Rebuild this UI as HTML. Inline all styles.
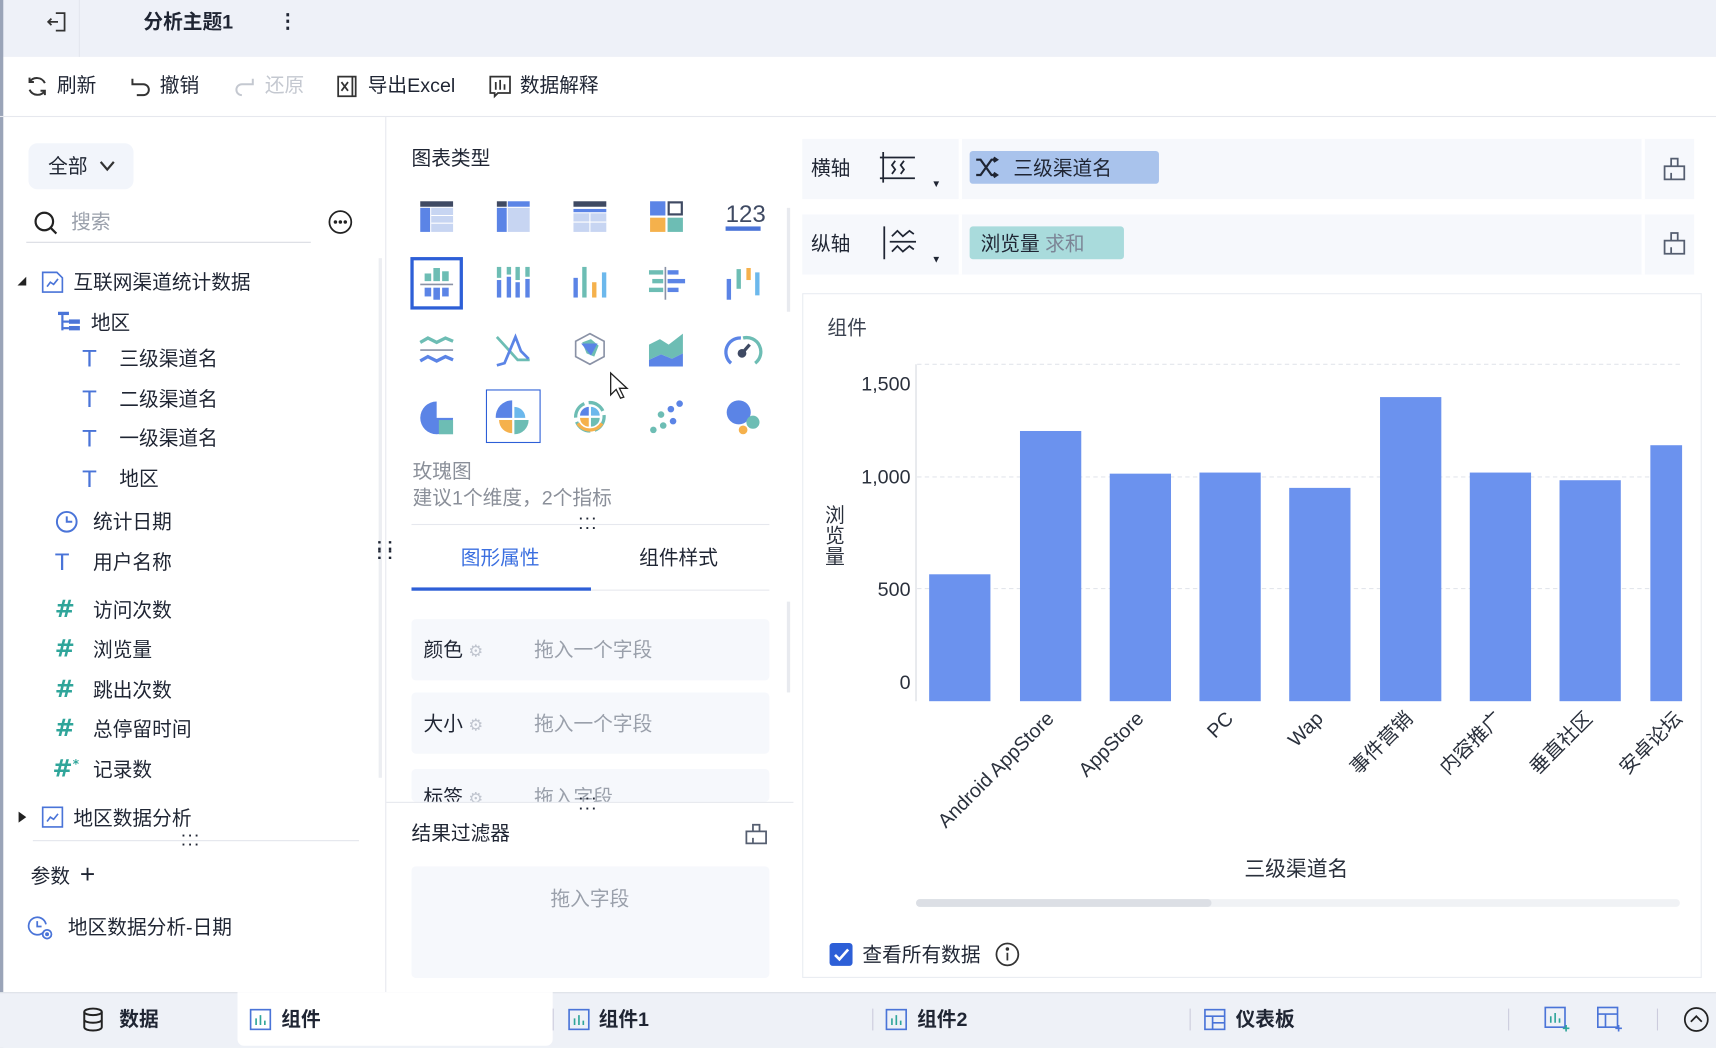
<!DOCTYPE html>
<html><head><meta charset="utf-8"><style>
*{box-sizing:border-box;margin:0;padding:0}
html,body{width:1716px;height:1048px;overflow:hidden;background:#fff}
#w{position:absolute;left:0;top:0;width:1568px;height:958px;transform:scale(1.0944,1.0939);transform-origin:0 0;font-family:"Liberation Sans","Noto Sans CJK SC",sans-serif;color:#1f2533;font-size:18px;line-height:17px}
.a{position:absolute;white-space:nowrap}
.g{color:#9aa0ab}
.h{color:#2fa59a;font-size:22px;font-weight:bold;font-family:"DejaVu Sans",sans-serif}
svg{position:absolute;overflow:visible}
</style></head><body><div id="w">
<!-- top bar -->
<div class="a" style="left:0;top:0;width:1568px;height:52px;background:#eef1f8"></div>
<div class="a" style="left:0;top:0;width:3px;height:958px;background:#9aa4b8"></div>
<div class="a" style="left:72px;top:0;width:1px;height:52px;background:#e2e6ee"></div>
<svg style="left:42px;top:9px" width="22" height="22" viewBox="0 0 22 22" fill="none" stroke="#333" stroke-width="1.6"><path d="M9 3h8v16H9M2 11h9M5 8l-3 3 3 3"/></svg>
<div class="a" style="left:131px;top:12px;font-weight:bold;font-size:18px">分析主题1</div>
<div class="a" style="left:254px;top:11px;font-weight:bold">⋮</div>
<!-- toolbar -->
<div class="a" style="left:0;top:106px;width:1568px;height:1px;background:#e6e8ee"></div>
<svg style="left:23px;top:68px" width="22" height="22" viewBox="0 0 22 22" fill="none" stroke="#333" stroke-width="1.8"><path d="M18 8A8 8 0 0 0 4 7M4 14a8 8 0 0 0 14 1M4 3v4h4M18 19v-4h-4"/></svg>
<div class="a" style="left:52px;top:70px">刷新</div>
<svg style="left:118px;top:68px" width="22" height="22" viewBox="0 0 22 22" fill="none" stroke="#333" stroke-width="1.8"><path d="M3 4v5h5M3 9h10a5 5 0 0 1 0 10H7"/></svg>
<div class="a" style="left:146px;top:70px">撤销</div>
<svg style="left:212px;top:68px" width="22" height="22" viewBox="0 0 22 22" fill="none" stroke="#c4c8d0" stroke-width="1.8"><path d="M19 4v5h-5M19 9H9a5 5 0 0 0 0 10"/></svg>
<div class="a" style="left:242px;top:70px;color:#c4c8d0">还原</div>
<svg style="left:306px;top:68px" width="22" height="22" viewBox="0 0 22 22" fill="none" stroke="#333" stroke-width="1.6"><path d="M3 2h13v18H3zM16 2h3v18h-3M6 7l6 8M12 7l-6 8"/></svg>
<div class="a" style="left:336px;top:70px">导出Excel</div>
<svg style="left:446px;top:68px" width="22" height="22" viewBox="0 0 22 22" fill="none" stroke="#333" stroke-width="1.6"><path d="M2 2h18v15H9l-3 3v-3H2zM7 7v7M11 5v9M15 9v5"/></svg>
<div class="a" style="left:475px;top:70px">数据解释</div>
<!-- left panel -->
<div class="a" style="left:352px;top:107px;width:1px;height:800px;background:#e6e8ee"></div>
<div class="a" style="left:26px;top:131px;width:96px;height:42px;background:#f2f5fb;border-radius:8px"></div>
<div class="a" style="left:44px;top:144px">全部</div>
<svg style="left:90px;top:146px" width="16" height="12" viewBox="0 0 16 12" fill="none" stroke="#333" stroke-width="2"><path d="M2 2l6 7 6-7"/></svg>
<svg style="left:30px;top:192px" width="24" height="24" viewBox="0 0 24 24" fill="none" stroke="#222" stroke-width="2"><circle cx="10.5" cy="10.5" r="8"/><path d="M16.5 16.5l5 5"/></svg>
<div class="a g" style="left:65px;top:195px">搜索</div>
<div class="a" style="left:24px;top:221px;width:260px;height:1px;background:#d8dbe2"></div>
<svg style="left:299px;top:191px" width="24" height="24" viewBox="0 0 24 24" fill="none" stroke="#222" stroke-width="1.6"><circle cx="12" cy="12" r="10"/><circle cx="7.5" cy="12" r=".8" fill="#222"/><circle cx="12" cy="12" r=".8" fill="#222"/><circle cx="16.5" cy="12" r=".8" fill="#222"/></svg>
<div class="a" style="left:346px;top:236px;width:3px;height:475px;background:#eceef2"></div>
<svg style="left:15px;top:252px" width="10" height="10"><path d="M9 1v8H1z" fill="#222"/></svg>
<svg style="left:37px;top:247px" width="22" height="22" viewBox="0 0 22 22" fill="none" stroke="#4a74d8" stroke-width="1.5"><path d="M2 2h13l5 5v13H2z"/><path d="M6 15l3-4 3 2 4-5"/></svg>
<div class="a" style="left:67px;top:250px">互联网渠道统计数据</div>
<svg style="left:52px;top:284px" width="22" height="20" viewBox="0 0 22 20" fill="#4a74d8"><rect x="1" y="1" width="10" height="3"/><rect x="4" y="4" width="2" height="14"/><rect x="6" y="9" width="5" height="2"/><rect x="11" y="8" width="10" height="4"/><rect x="6" y="15" width="5" height="2"/><rect x="11" y="14" width="10" height="4"/></svg>
<div class="a" style="left:83px;top:287px">地区</div>
<div class="a" style="left:75px;top:319px;color:#4a74d8;font-size:22px">T</div><div class="a" style="left:109px;top:320px">三级渠道名</div>
<div class="a" style="left:75px;top:356px;color:#4a74d8;font-size:22px">T</div><div class="a" style="left:109px;top:357px">二级渠道名</div>
<div class="a" style="left:75px;top:392px;color:#4a74d8;font-size:22px">T</div><div class="a" style="left:109px;top:393px">一级渠道名</div>
<div class="a" style="left:75px;top:429px;color:#4a74d8;font-size:22px">T</div><div class="a" style="left:109px;top:430px">地区</div>
<svg style="left:50px;top:466px" width="22" height="22" viewBox="0 0 22 22" fill="none" stroke="#4a74d8" stroke-width="1.8"><circle cx="11" cy="11" r="9"/><path d="M11 6v5h5"/></svg>
<div class="a" style="left:85px;top:469px">统计日期</div>
<div class="a" style="left:50px;top:505px;color:#4a74d8;font-size:22px">T</div><div class="a" style="left:85px;top:506px">用户名称</div>
<div class="a h" style="left:50px;top:549px">#</div><div class="a" style="left:85px;top:550px">访问次数</div>
<div class="a h" style="left:50px;top:585px">#</div><div class="a" style="left:85px;top:586px">浏览量</div>
<div class="a h" style="left:50px;top:622px">#</div><div class="a" style="left:85px;top:623px">跳出次数</div>
<div class="a h" style="left:50px;top:658px">#</div><div class="a" style="left:85px;top:659px">总停留时间</div>
<div class="a h" style="left:48px;top:695px">#<span style="font-size:11px;position:relative;top:-8px">*</span></div><div class="a" style="left:85px;top:696px">记录数</div>
<svg style="left:16px;top:741px" width="10" height="12"><path d="M1 1l7 5-7 5z" fill="#222"/></svg>
<svg style="left:37px;top:736px" width="22" height="22" viewBox="0 0 22 22" fill="none" stroke="#4a74d8" stroke-width="1.5"><path d="M2 2h18v18H2z"/><path d="M6 15l3-4 3 2 4-5"/></svg>
<div class="a" style="left:67px;top:740px">地区数据分析</div>
<div class="a" style="left:30px;top:768px;width:298px;height:1px;background:#e3e6ec"></div>
<div class="a" style="left:166px;top:760px;font-size:12px;font-weight:bold;line-height:8px;letter-spacing:2px">···<br>···</div>
<div class="a" style="left:28px;top:793px">参数</div>
<div class="a" style="left:73px;top:788px;font-size:24px;line-height:24px">+</div>
<svg style="left:25px;top:837px" width="26" height="24" viewBox="0 0 26 24" fill="none" stroke="#4a74d8" stroke-width="1.6"><path d="M15 15A8 8 0 1 1 17 8"/><path d="M9 5v5h4"/><circle cx="18" cy="17" r="4"/><circle cx="18" cy="17" r="1" fill="#4a74d8"/></svg>
<div class="a" style="left:62px;top:840px">地区数据分析-日期</div>
<div class="a" style="left:344px;top:495px;font-size:16px;font-weight:bold;line-height:8px">: :<br>: :</div>
<!-- middle panel -->
<div class="a" style="left:376px;top:137px">图表类型</div>
<div class="a" style="left:719px;top:190px;width:3px;height:95px;background:#e8eaef"></div>
<svg style="left:384px;top:184px" width="30" height="28"><rect x="0" y="0" width="30" height="5" fill="#3f4a63"/><rect x="0" y="6" width="9" height="22" fill="#5b84e6"/><rect x="10" y="6" width="20" height="22" fill="#c7d5f2"/><path d="M10 13h20M10 20h20" stroke="#fff"/></svg>
<svg style="left:454px;top:184px" width="30" height="28"><rect x="0" y="0" width="9" height="5" fill="#3f4a63"/><rect x="10" y="0" width="20" height="5" fill="#5b84e6"/><rect x="0" y="6" width="9" height="22" fill="#5b84e6"/><rect x="10" y="6" width="20" height="22" fill="#c7d5f2"/></svg>
<svg style="left:524px;top:184px" width="30" height="28"><rect x="0" y="0" width="30" height="5" fill="#3f4a63"/><rect x="0" y="7" width="30" height="3" fill="#5b84e6"/><rect x="0" y="11" width="30" height="17" fill="#c7d5f2"/><path d="M15 11v17M0 19h30" stroke="#fff"/></svg>
<svg style="left:594px;top:184px" width="30" height="28"><rect x="0" y="0" width="14" height="13" fill="#5b84e6"/><rect x="17" y="1" width="12" height="11" fill="none" stroke="#3f4a63" stroke-width="2"/><rect x="0" y="15" width="14" height="13" fill="#f5b14c"/><rect x="16" y="15" width="14" height="13" fill="#6dbdb4"/></svg>
<div class="a" style="left:663px;top:186px;font-size:22px;line-height:20px;color:#3f4a63">123</div>
<div class="a" style="left:663px;top:207px;width:32px;height:4px;background:#4a74d8"></div>
<div class="a" style="left:375px;top:235px;width:48px;height:48px;border:3px solid #2d5fd7"></div>
<svg style="left:384px;top:244px" width="30" height="30"><rect x="4" y="6" width="6" height="7" fill="#6dbdb4"/><rect x="12" y="1" width="6" height="12" fill="#6dbdb4"/><rect x="20" y="4" width="6" height="9" fill="#6dbdb4"/><path d="M0 16h30" stroke="#8a92a6" stroke-width="1.5"/><rect x="4" y="19" width="6" height="8" fill="#5b84e6"/><rect x="12" y="19" width="6" height="11" fill="#5b84e6"/><rect x="20" y="19" width="6" height="8" fill="#5b84e6"/></svg>
<svg style="left:454px;top:244px" width="30" height="28"><g fill="#5b84e6"><rect x="0" y="12" width="4" height="16"/><rect x="9" y="9" width="4" height="19"/><rect x="17" y="14" width="4" height="14"/><rect x="26" y="11" width="4" height="17"/></g><g fill="#6dbdb4"><rect x="0" y="0" width="4" height="10"/><rect x="9" y="0" width="4" height="7"/><rect x="17" y="0" width="4" height="12"/><rect x="26" y="0" width="4" height="9"/></g></svg>
<svg style="left:524px;top:244px" width="30" height="28"><rect x="0" y="10" width="4" height="18" fill="#5b84e6"/><rect x="8" y="0" width="4" height="28" fill="#6dbdb4"/><rect x="17" y="14" width="4" height="14" fill="#f5b14c"/><rect x="26" y="5" width="4" height="23" fill="#6cb8ec"/></svg>
<svg style="left:592px;top:244px" width="34" height="30"><rect x="1" y="3" width="13" height="4" fill="#6dbdb4"/><rect x="18" y="3" width="10" height="4" fill="#5b84e6"/><rect x="4" y="11" width="10" height="4" fill="#6dbdb4"/><rect x="18" y="11" width="16" height="4" fill="#5b84e6"/><rect x="1" y="19" width="13" height="4" fill="#6dbdb4"/><rect x="18" y="19" width="10" height="4" fill="#5b84e6"/><path d="M16 0v30" stroke="#8a92a6" stroke-width="1.5"/></svg>
<svg style="left:664px;top:244px" width="30" height="30"><rect x="0" y="11" width="4" height="19" fill="#5b84e6"/><rect x="9" y="2" width="4" height="18" fill="#6dbdb4"/><rect x="18" y="1" width="4" height="11" fill="#f5b14c"/><rect x="26" y="5" width="4" height="21" fill="#6cb8ec"/></svg>
<svg style="left:383px;top:305px" width="32" height="30" fill="none" stroke-width="3"><path d="M1 8l7-4 8 4 8-4 7 3" stroke="#6dbdb4"/><path d="M1 15h30" stroke="#8a92a6" stroke-width="1.5"/><path d="M1 25l7-4 8 4 8-4 7 3" stroke="#5b84e6"/></svg>
<svg style="left:453px;top:305px" width="32" height="30" fill="none" stroke-width="2.5"><path d="M1 3l10 11 9 10h11" stroke="#6dbdb4"/><path d="M1 29l7-2 10-24 5 13 7 7" stroke="#5b84e6"/></svg>
<svg style="left:523px;top:303px" width="32" height="32"><path d="M16 2l13 7v14l-13 7-13-7V9z" fill="none" stroke="#8a92a6" stroke-width="1.5"/><path d="M9 10l8-3 7 6-4 10-7-3z" fill="#6dbdb4"/><path d="M8 11h15l-6 11z" fill="#5b84e6"/></svg>
<svg style="left:593px;top:305px" width="32" height="30"><path d="M0 10l10-5 8 5 13-10v18l-10 5-10-4-11 5z" fill="#6dbdb4"/><path d="M0 24l11-5 10 4 10-5v12H0z" fill="#5b84e6"/></svg>
<svg style="left:663px;top:305px" width="32" height="30" fill="none"><path d="M5 27A13 13 0 0 1 14 4" stroke="#5b84e6" stroke-width="3"/><path d="M16 4a13 13 0 0 1 11 23" stroke="#6dbdb4" stroke-width="3"/><circle cx="15" cy="18" r="4" fill="#3f4a63"/><path d="M15 18l7-8" stroke="#3f4a63" stroke-width="3"/></svg>
<svg style="left:383px;top:366px" width="32" height="32"><path d="M16 1A15 15 0 1 0 31 16H16z" fill="#5b84e6"/><rect x="18" y="18" width="13" height="13" fill="#6dbdb4"/></svg>
<div class="a" style="left:444px;top:356px;width:50px;height:49px;border:1.5px solid #2d5fd7"></div>
<svg style="left:452px;top:365px" width="34" height="34"><path d="M16 17V1A15 15 0 0 0 1 17z" fill="#5b84e6"/><path d="M18 17V7a10 10 0 0 1 10 10z" fill="#6cb8ec"/><path d="M16 19H4a12 12 0 0 0 12 12z" fill="#f5b14c"/><path d="M18 19h13a13 13 0 0 1-13 13z" fill="#6dbdb4"/></svg>
<svg style="left:523px;top:365px" width="32" height="32" fill="none"><circle cx="16" cy="16" r="13" stroke="#6dbdb4" stroke-width="3" stroke-dasharray="16 4"/><path d="M5 22a13 13 0 0 0 22 0" stroke="#f5b14c" stroke-width="3"/><path d="M15 15V7a8 8 0 0 0-8 8z" fill="#5b84e6"/><path d="M17 15V7a8 8 0 0 1 8 8z" fill="#6cb8ec"/><path d="M15 17H7a8 8 0 0 0 8 8z" fill="#f5b14c"/><path d="M17 17h8a8 8 0 0 1-8 8z" fill="#6dbdb4"/></svg>
<svg style="left:593px;top:365px" width="32" height="32"><g fill="#6dbdb4"><circle cx="4" cy="28" r="3"/><circle cx="13" cy="24" r="3"/><circle cx="11" cy="14" r="3"/></g><g fill="#5b84e6"><circle cx="22" cy="20" r="3"/><circle cx="20" cy="9" r="3"/><circle cx="28" cy="4" r="3"/></g></svg>
<svg style="left:663px;top:365px" width="32" height="32"><circle cx="12" cy="12" r="11" fill="#5b84e6"/><circle cx="25" cy="21" r="6" fill="#6dbdb4"/><circle cx="16" cy="28" r="4" fill="#f5b14c"/></svg>
<svg style="left:557px;top:340px" width="18" height="26"><path d="M1 1v20l5-5 4 8 3-1-4-8h7z" fill="#fff" stroke="#222" stroke-width="1.2"/></svg>
<div class="a" style="left:377px;top:423px;color:#8a8f99">玫瑰图</div>
<div class="a" style="left:377px;top:447px;color:#8a8f99">建议1个维度，2个指标</div>
<div class="a" style="left:376px;top:479px;width:327px;height:1px;background:#e6e8ee"></div>
<div class="a" style="left:529px;top:470px;font-size:12px;font-weight:bold;line-height:9px;letter-spacing:2px">···<br>···</div>
<div class="a" style="left:421px;top:502px;color:#3b6fe0">图形属性</div>
<div class="a" style="left:584px;top:502px">组件样式</div>
<div class="a" style="left:376px;top:539px;width:327px;height:1px;background:#e6e8ee"></div>
<div class="a" style="left:376px;top:537px;width:164px;height:3px;background:#2d5fd7"></div>
<div class="a" style="left:719px;top:550px;width:3px;height:83px;background:#e8eaef"></div>
<div class="a" style="left:376px;top:566px;width:327px;height:56px;background:#f6f8fc;border-radius:4px"></div>
<div class="a" style="left:387px;top:586px">颜色 <span style="color:#c0c5cf;font-size:15px">⚙</span></div><div class="a g" style="left:488px;top:586px">拖入一个字段</div>
<div class="a" style="left:376px;top:633px;width:327px;height:56px;background:#f6f8fc;border-radius:4px"></div>
<div class="a" style="left:387px;top:654px">大小 <span style="color:#c0c5cf;font-size:15px">⚙</span></div><div class="a g" style="left:488px;top:654px">拖入一个字段</div>
<div class="a" style="left:376px;top:703px;width:327px;height:30px;background:#f6f8fc;border-radius:4px;overflow:hidden"><div class="a" style="left:11px;top:18px">标签 <span style="color:#c0c5cf;font-size:15px">⚙</span></div><div class="a g" style="left:112px;top:18px">拖入字段</div></div>
<div class="a" style="left:353px;top:733px;width:372px;height:1px;background:#e6e8ee"></div>
<div class="a" style="left:529px;top:726px;font-size:12px;font-weight:bold;line-height:9px;letter-spacing:2px">···<br>···</div>
<div class="a" style="left:376px;top:754px">结果过滤器</div>
<svg style="left:681px;top:752px" width="20" height="20" viewBox="0 0 20 20" fill="none" stroke="#555e70" stroke-width="1.6"><path d="M1 8h18v11H1zM7 8V2h6v6M7 14v5"/></svg>
<div class="a" style="left:376px;top:792px;width:327px;height:102px;background:#f6f8fc;border-radius:4px"></div>
<div class="a g" style="left:503px;top:814px">拖入字段</div>
<!-- right panel -->
<div class="a" style="left:733px;top:127px;width:815px;height:55px;background:#f6f8fc"></div>
<div class="a" style="left:876px;top:127px;width:3px;height:55px;background:#fff"></div>
<div class="a" style="left:1500px;top:127px;width:3px;height:55px;background:#fff"></div>
<div class="a" style="left:741px;top:146px">横轴</div>
<svg style="left:804px;top:138px" width="34" height="30" fill="none" stroke="#1f2533" stroke-width="1.6"><path d="M3 1v28M0 6h32M0 25h32M14 9l-3 4 3 4-3 4M22 9l-3 4 3 4-3 4"/></svg>
<div class="a" style="left:851px;top:160px;font-size:9px">▼</div>
<div class="a" style="left:886px;top:138px;width:173px;height:30px;background:#a9c3ec;border-radius:3px"></div>
<svg style="left:891px;top:143px" width="22" height="20" fill="none" stroke="#1f2533" stroke-width="2"><path d="M1 3h4l10 14h5M1 17h4l10-14h5M17 1l3 2-3 2M17 15l3 2-3 2"/></svg>
<div class="a" style="left:926px;top:146px">三级渠道名</div>
<svg style="left:1520px;top:143px" width="20" height="22" viewBox="0 0 20 22" fill="none" stroke="#555e70" stroke-width="1.6"><path d="M1 9h18v12H1zM7 9V2h6v7M7 15v6"/></svg>
<div class="a" style="left:733px;top:196px;width:815px;height:55px;background:#f6f8fc"></div>
<div class="a" style="left:876px;top:196px;width:3px;height:55px;background:#fff"></div>
<div class="a" style="left:1500px;top:196px;width:3px;height:55px;background:#fff"></div>
<div class="a" style="left:741px;top:215px">纵轴</div>
<svg style="left:805px;top:206px" width="32" height="32" fill="none" stroke="#1f2533" stroke-width="1.6"><path d="M3 1v30M8 15h24M10 10l5-5 5 5 6-5 4 3M10 24l5-5 5 5 6-5 4 3"/></svg>
<div class="a" style="left:851px;top:229px;font-size:9px">▼</div>
<div class="a" style="left:886px;top:207px;width:141px;height:30px;background:#a9dbdc;border-radius:3px"></div>
<div class="a" style="left:896px;top:215px">浏览量 <span style="color:#7c8596">求和</span></div>
<svg style="left:1520px;top:211px" width="20" height="22" viewBox="0 0 20 22" fill="none" stroke="#555e70" stroke-width="1.6"><path d="M1 9h18v12H1zM7 9V2h6v7M7 15v6"/></svg>
<div class="a" style="left:733px;top:268px;width:822px;height:626px;border:1px solid #e9ecf2;background:#fff"></div>
<div class="a" style="left:756px;top:292px;color:#3b4250">组件</div>
<svg style="left:0;top:0" width="1568" height="958">
<g stroke="#e3e6ec" stroke-dasharray="4 3"><path d="M838 333H1535M838 436H1535M838 538H1535"/></g>
<path d="M837 333V641" stroke="#d6d9e0"/>
<g fill="#6b92ee">
<rect x="849" y="525" width="56" height="116"/><rect x="932" y="394" width="56" height="247"/><rect x="1014" y="433" width="56" height="208"/><rect x="1096" y="432" width="56" height="209"/><rect x="1178" y="446" width="56" height="195"/><rect x="1261" y="363" width="56" height="278"/><rect x="1343" y="432" width="56" height="209"/><rect x="1425" y="439" width="56" height="202"/><rect x="1508" y="407" width="29" height="234"/></g>
<g font-family="Liberation Sans,Noto Sans CJK SC,sans-serif" font-size="18" fill="#2a303c" text-anchor="end">
<text x="832" y="357">1,500</text><text x="832" y="442">1,000</text><text x="832" y="545">500</text><text x="832" y="630">0</text>
<text transform="translate(964 658) rotate(-45)">Android AppStore</text>
<text transform="translate(1046 658) rotate(-45)">AppStore</text>
<text transform="translate(1128 658) rotate(-45)">PC</text>
<text transform="translate(1210 658) rotate(-45)">Wap</text>
<text transform="translate(1292 658) rotate(-45)">事件营销</text>
<text transform="translate(1374 658) rotate(-45)">内容推广</text>
<text transform="translate(1456 658) rotate(-45)">垂直社区</text>
<text transform="translate(1538 658) rotate(-45)">安卓论坛</text>
</g>
<rect x="837" y="822" width="698" height="7" rx="3.5" fill="#f0f2f5"/><rect x="837" y="822" width="270" height="7" rx="3.5" fill="#dcdfe5"/>
</svg>
<div class="a" style="left:754px;top:462px;font-size:18px;line-height:19px;width:20px;white-space:normal;color:#2a303c">浏览量</div>
<div class="a" style="left:1137px;top:787px;font-size:19px;color:#2a303c">三级渠道名</div>
<div class="a" style="left:758px;top:862px;width:21px;height:21px;background:#2d5fd7;border-radius:3px"></div>
<svg style="left:761px;top:866px" width="16" height="14" fill="none" stroke="#fff" stroke-width="2.4"><path d="M2 7l4 4 8-9"/></svg>
<div class="a" style="left:788px;top:865px">查看所有数据</div>
<svg style="left:909px;top:861px" width="23" height="23" fill="none" stroke="#333" stroke-width="1.6"><circle cx="11.5" cy="11.5" r="10"/><path d="M11.5 10v7"/><circle cx="11.5" cy="6.5" r=".8" fill="#333"/></svg>
<!-- bottom bar -->
<div class="a" style="left:0;top:907px;width:1568px;height:51px;background:#eef1f7;border-top:1px solid #dde1e8"></div>
<div class="a" style="left:217px;top:907px;width:288px;height:49px;background:#fff;border-radius:0 0 6px 6px"></div>
<svg style="left:75px;top:921px" width="20" height="22" fill="none" stroke="#222" stroke-width="1.8"><ellipse cx="10" cy="4" rx="8" ry="3"/><path d="M2 4v14c0 4 16 4 16 0V4M2 11c0 4 16 4 16 0"/></svg>
<div class="a" style="left:109px;top:924px;font-weight:bold">数据</div>
<svg style="left:228px;top:922px" width="20" height="20" fill="none" stroke="#4a74d8" stroke-width="1.5"><rect x="1" y="1" width="18" height="18"/><path d="M6 15V9M10 15V6M14 15v-4" stroke="#2fa59a"/></svg>
<div class="a" style="left:257px;top:924px;font-weight:bold">组件</div>
<div class="a" style="left:505px;top:922px;width:1px;height:20px;background:#ccd"></div>
<svg style="left:519px;top:922px" width="20" height="20" fill="none" stroke="#4a74d8" stroke-width="1.5"><rect x="1" y="1" width="18" height="18"/><path d="M6 15V9M10 15V6M14 15v-4" stroke="#2fa59a"/></svg>
<div class="a" style="left:547px;top:924px;font-weight:bold">组件1</div>
<div class="a" style="left:797px;top:922px;width:1px;height:20px;background:#ccd"></div>
<svg style="left:809px;top:922px" width="20" height="20" fill="none" stroke="#4a74d8" stroke-width="1.5"><rect x="1" y="1" width="18" height="18"/><path d="M6 15V9M10 15V6M14 15v-4" stroke="#2fa59a"/></svg>
<div class="a" style="left:838px;top:924px;font-weight:bold">组件2</div>
<div class="a" style="left:1087px;top:922px;width:1px;height:20px;background:#ccd"></div>
<svg style="left:1100px;top:922px" width="20" height="20" fill="none" stroke="#4a74d8" stroke-width="1.5"><rect x="1" y="1" width="18" height="18"/><path d="M1 7h18M8 7v12M8 13h11"/></svg>
<div class="a" style="left:1129px;top:924px;font-weight:bold">仪表板</div>
<div class="a" style="left:1378px;top:922px;width:1px;height:20px;background:#ccd"></div>
<svg style="left:1411px;top:920px" width="24" height="24" fill="none" stroke="#4a74d8" stroke-width="1.5"><rect x="1" y="1" width="18" height="18"/><path d="M6 15V9M10 15V6M14 15v-4" stroke="#2fa59a"/><path d="M20 17v6M17 20h6" stroke="#2fa59a"/></svg>
<svg style="left:1459px;top:920px" width="24" height="24" fill="none" stroke="#4a74d8" stroke-width="1.5"><rect x="1" y="1" width="18" height="18"/><path d="M1 7h18M8 7v12"/><path d="M20 17v6M17 20h6"/></svg>
<div class="a" style="left:1514px;top:922px;width:1px;height:20px;background:#ccd"></div>
<svg style="left:1538px;top:920px" width="24" height="24" fill="none" stroke="#222" stroke-width="1.6"><circle cx="12" cy="12" r="10.5"/><path d="M7 14l5-5 5 5"/></svg>
</div></body></html>
